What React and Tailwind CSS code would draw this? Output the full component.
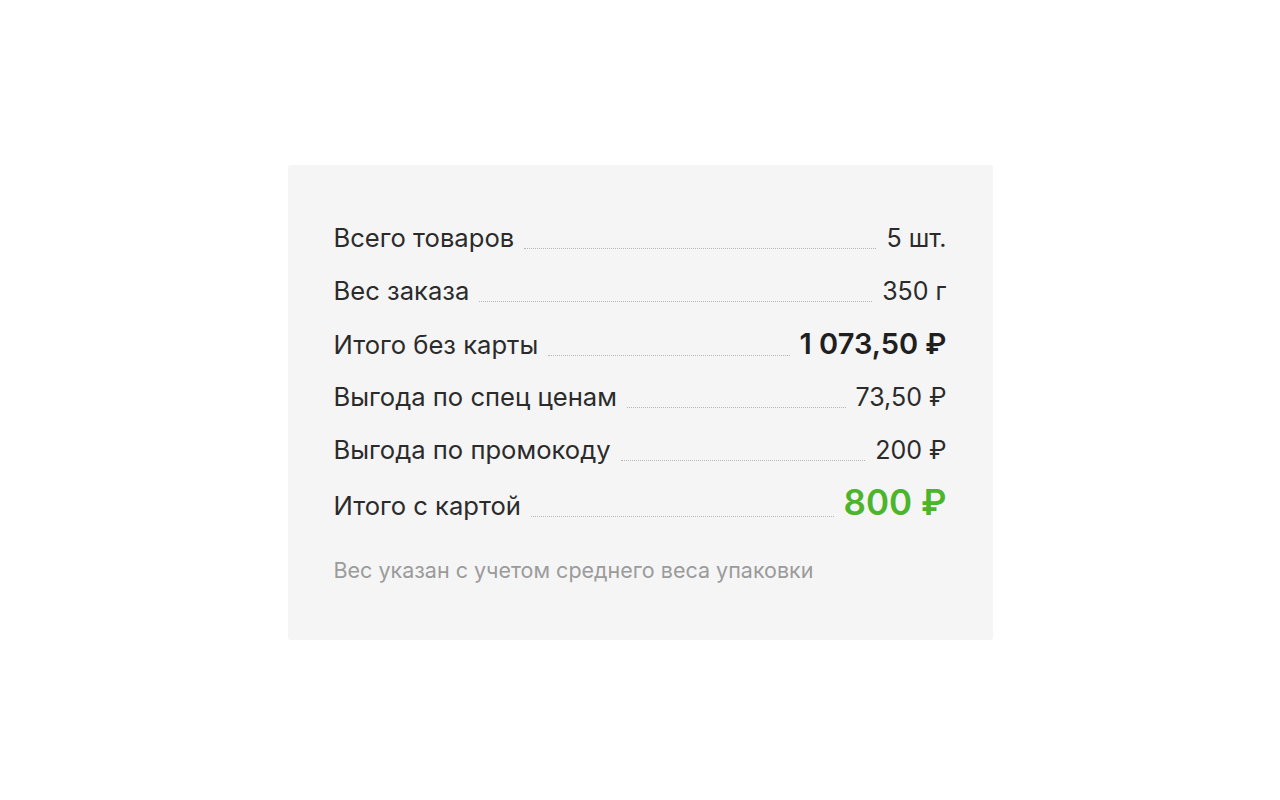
import React from 'react';

const rows = [
    { label: 'Всего товаров', value: '5 шт.' },
    { label: 'Вес заказа', value: '350 г' },
    { label: 'Итого без карты', value: '1 073,50 ₽', kind: 'bold' },
    { label: 'Выгода по спец ценам', value: '73,50 ₽' },
    { label: 'Выгода по промокоду', value: '200 ₽' },
    { label: 'Итого с картой', value: '800 ₽', kind: 'green' },
];

function Row({ label, value, kind }) {
    let valueClass = 'text-[25px] text-[#2b2b2b]';
    if (kind === 'bold') valueClass = 'text-[29px] font-semibold text-[#1f1f1f]';
    if (kind === 'green') valueClass = 'text-[35px] font-semibold text-[#4cb52a]';

    return (
        <div className="flex items-baseline h-[53px] leading-[53px]">
            <span className="text-[25.6px] text-[#2b2b2b] whitespace-nowrap">{label}</span>
            <div className="flex-1 mx-[10px] relative top-[2px] border-b border-dotted border-[#b5b5b5]" />
            <span className={valueClass + ' whitespace-nowrap'}>{value}</span>
        </div>
    );
}

export default function App() {
    return (
        <div className="w-[1280px] h-[800px] bg-white flex justify-center pt-[165px] font-['Inter','Noto_Sans',sans-serif]">
            <div className="w-[705px] h-[475px] bg-[#f5f5f5] rounded-[3px] px-[46px] pt-[46px]">
                <div className="flex flex-col">
                    {rows.map((row) => (
                        <Row key={row.label} {...row} />
                    ))}
                </div>
                <p className="mt-[28px] text-[21.5px] text-[#9b9b9b] leading-[26px]">
                    Вес указан с учетом среднего веса упаковки
                </p>
            </div>
        </div>
    );
}
